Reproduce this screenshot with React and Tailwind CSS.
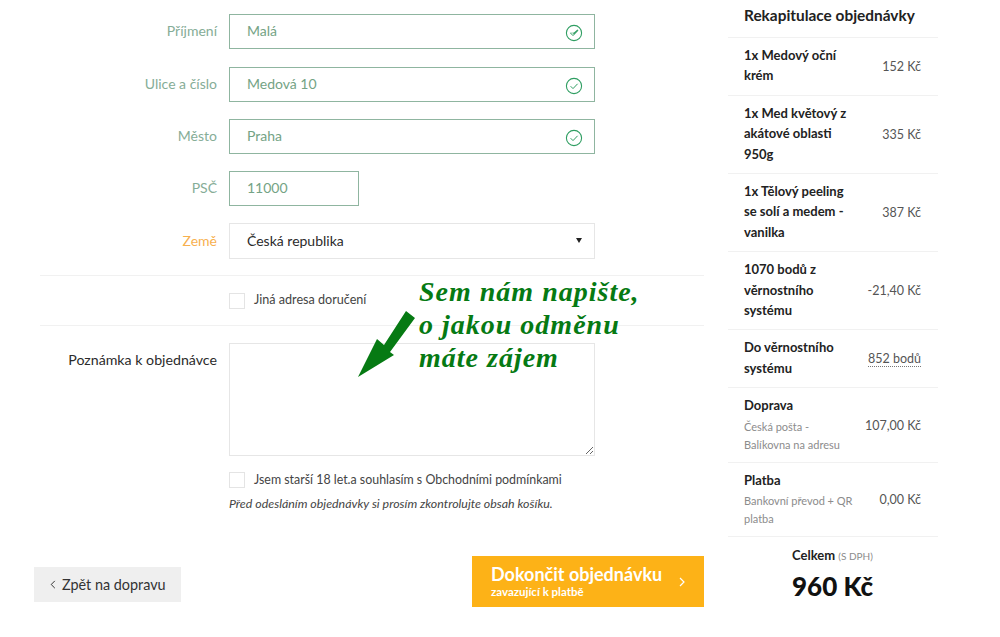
import React from 'react';

const FONT = 'font-["Lato",sans-serif]';

const ADDRESS_ROWS = [
  { label: 'Příjmení', value: 'Malá', autofill: true, gap: 'mb-[18px]' },
  { label: 'Ulice a číslo', value: 'Medová 10', gap: 'mb-[17px]' },
  { label: 'Město', value: 'Praha', gap: 'mb-[17px]' },
];

const SUMMARY_ROWS = [
  { title: '1x Medový oční krém', price: '152 Kč' },
  { title: '1x Med květový z akátové oblasti 950g', price: '335 Kč' },
  { title: '1x Tělový peeling se solí a medem - vanilka', price: '387 Kč' },
  { title: '1070 bodů z věrnostního systému', price: '-21,40 Kč' },
  { title: 'Do věrnostního systému', price: '852 bodů', dotted: true },
  { title: 'Doprava', note: 'Česká pošta - Balíkovna na adresu', price: '107,00 Kč' },
  { title: 'Platba', note: 'Bankovní převod + QR platba', price: '0,00 Kč' },
];

const CheckIcon = ({ autofill }) => (
  <svg viewBox="0 0 18 18" className="absolute right-[12px] top-[10px] w-[18px] h-[18px]" fill="none">
    <circle cx="9" cy="9" r="7.6" stroke="#2f9e62" strokeWidth="1.1" />
    <path d="M5.6 9.2l2.4 2.4 4.6-4.8" stroke="#2f9e62" strokeWidth="1" />
    {autofill && <path d="M5 9.2h3l1 1.2 4.4-4.2-1-.8-3.4 3.2-1 .2H5z" fill="#2f9e62" />}
  </svg>
);

const FieldRow = ({ label, labelClass = 'text-[#86ad97]', children, className = '' }) => (
  <div className={`flex items-center ${className}`}>
    <label className={`w-[177px] pb-[2px] text-right text-[14px] ${labelClass}`}>{label}</label>
    <div className="relative ml-[12px] w-[366px]">{children}</div>
  </div>
);

const CheckBox = () => <span className="block w-[16px] h-[16px] border border-[#e4e4e4] bg-white shrink-0" />;

export default function App() {
  return (
    <div className={`${FONT} relative flex w-[1000px] h-[637px] overflow-hidden bg-white text-[#2b2b2b]`}>
      <div className="w-[728px] shrink-0 pl-[40px] pr-[24px] pt-[14px]">
        {ADDRESS_ROWS.map((row) => (
          <FieldRow key={row.label} label={row.label} className={row.gap}>
            <input
              readOnly
              value={row.value}
              className="block w-full h-[35px] pl-[17px] pr-[40px] pb-[2px] border border-[#8fb5a0] text-[14px] text-[#74a385] outline-none"
            />
            <CheckIcon autofill={row.autofill} />
          </FieldRow>
        ))}
        <FieldRow label="PSČ" className="mb-[17px]">
          <input
            readOnly
            value="11000"
            className="block w-[130px] h-[35px] pl-[17px] pb-[2px] border border-[#8fb5a0] text-[14px] text-[#74a385] outline-none"
          />
        </FieldRow>
        <FieldRow label="Země" labelClass="text-[#f7b04f]">
          <select className="block w-full h-[36px] pl-[17px] pb-[2px] border border-[#e6e6e6] bg-white text-[14px] text-[#2b2b2b] appearance-none outline-none">
            <option>Česká republika</option>
          </select>
          <span className="absolute right-[13px] top-[15px] w-0 h-0 border-x-[3px] border-x-transparent border-t-[5px] border-t-[#222]" />
        </FieldRow>

        <div className="mt-[16px] border-t border-[#f1f1f1] flex items-center h-[50px] pl-[189px] gap-[9px] text-[12.6px] text-[#444]">
          <CheckBox />
          <span>Jiná adresa doručení</span>
        </div>

        <div className="border-t border-[#f1f1f1] pt-[17px] flex items-start">
          <label className="w-[177px] text-right text-[14.2px] pt-[6px]">Poznámka k objednávce</label>
          <textarea className="block ml-[12px] w-[366px] h-[113px] border border-[#e6e6e6] outline-none" />
        </div>

        <div className="mt-[15px] flex items-center pl-[189px] gap-[9px] text-[12.4px] text-[#444]">
          <CheckBox />
          <span>Jsem starší 18 let.a souhlasím s Obchodními podmínkami</span>
        </div>
        <p className="mt-[5px] pl-[189px] text-[12.4px] italic text-[#444]">
          Před odesláním objednávky si prosím zkontrolujte obsah košíku.
        </p>

        <div className="mt-[43px] -ml-[6px] flex items-start justify-between">
          <button className="mt-[11px] flex items-center gap-[6px] w-[147px] h-[35px] pl-[16px] bg-[#efefef] text-[14.4px] text-[#333]">
            <svg viewBox="0 0 6 10" className="w-[6px] h-[9px]" fill="none" stroke="#333" strokeWidth="1.1">
              <path d="M5 1L1 5l4 4" />
            </svg>
            Zpět na dopravu
          </button>
          <button className="flex items-center justify-between w-[232px] h-[51px] pl-[19px] pr-[19px] bg-[#fdb217] text-white text-left">
            <span className="block">
              <span className="block text-[18px] leading-[21px] font-bold">Dokončit objednávku</span>
              <span className="block text-[11.5px] leading-[14px] font-bold">zavazující k platbě</span>
            </span>
            <svg viewBox="0 0 6 10" className="w-[6px] h-[10px]" fill="none" stroke="#fff" strokeWidth="1.2">
              <path d="M1 1l4 4-4 4" />
            </svg>
          </button>
        </div>
      </div>

      <aside className="w-[210px] shrink-0">
        <h2 className="h-[38px] pl-[16px] pt-[5px] text-[15.4px] leading-[20px] font-bold text-[#222] border-b border-[#f1f1f1]">
          Rekapitulace objednávky
        </h2>
        {SUMMARY_ROWS.map((row) => (
          <div
            key={row.title}
            className={`flex items-center justify-between pl-[16px] pr-[17px] pt-[7px] border-b border-[#f1f1f1] ${row.note ? 'pb-[8px]' : 'pb-[9px]'}`}
          >
            <div className="w-[112px]">
              <div className="text-[13px] leading-[20.4px] font-bold text-[#222]">{row.title}</div>
              {row.note && <div className="mt-[2px] text-[11px] leading-[18px] text-[#8c8c8c]">{row.note}</div>}
            </div>
            <span className={`mt-[3px] text-[12.5px] text-[#555] whitespace-nowrap ${row.dotted ? 'border-b border-dotted border-[#777] leading-[15px]' : ''}`}>
              {row.price}
            </span>
          </div>
        ))}
        <div className="pl-[64px] pt-[9px]">
          <div className="text-[13px] leading-[18px] font-bold text-[#222]">
            Celkem <span className="text-[10px] font-normal text-[#8c8c8c]">(S DPH)</span>
          </div>
          <div className="mt-[6px] text-[26px] leading-[30px] font-black text-[#111]">960 Kč</div>
        </div>
      </aside>

      <div className='absolute left-[419px] top-[275px] font-["Liberation_Serif",serif] italic font-bold text-[28px] leading-[33px] tracking-[1px] text-[#067a13]'>
        Sem nám napište,
        <br />
        o jakou odměnu
        <br />
        máte zájem
      </div>
      <svg viewBox="0 0 60 70" className="absolute left-[357px] top-[309px] w-[60px] h-[70px]">
        <path d="M1 68L20 30l7 6L49 2l9 7-25 34 4 3z" fill="#067a13" />
      </svg>
    </div>
  );
}
